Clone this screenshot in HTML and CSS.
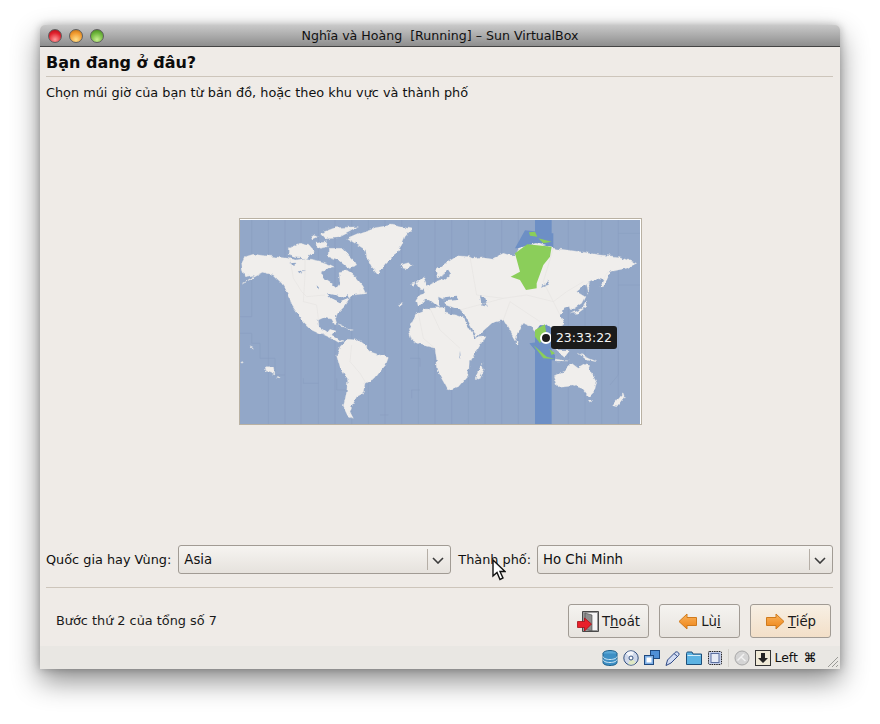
FILE: index.html
```html
<!DOCTYPE html>
<html lang="vi">
<head>
<meta charset="utf-8">
<title>Nghĩa và Hoàng [Running] – Sun VirtualBox</title>
<link rel="stylesheet" href="styles.css">
</head>
<body>
<div class="window">
  <div class="titlebar">
    <div class="lights"><span class="light red"></span><span class="light amber"></span><span class="light green"></span></div>
    <div class="title">Nghĩa và Hoàng&nbsp; [Running] – Sun VirtualBox</div>
  </div>
  <div class="content">
    <h1 class="heading">Bạn đang ở đâu?</h1>
    <div class="rule"></div>
    <p class="desc">Chọn múi giờ của bạn từ bản đồ, hoặc theo khu vực và thành phố</p>
    <div class="map-area">
      <div class="map">
        <svg class="map-svg" width="400" height="204" viewBox="240 220 400 204">
          <defs>
            <filter id="coast" filterUnits="userSpaceOnUse" x="-620" y="0" width="1240" height="650" color-interpolation-filters="sRGB">
              <feTurbulence type="fractalNoise" baseFrequency=".05" numOctaves="3" seed="4" result="n"/>
              <feDisplacementMap in="SourceGraphic" in2="n" scale="14" xChannelSelector="R" yChannelSelector="G" result="d"/>
              <feGaussianBlur in="d" stdDeviation=".9"/>
            </filter>
          </defs>
          <rect x="240" y="220" width="400" height="204" fill="#92a7c8"/>
          <g transform="translate(440 215) scale(.3333)">
            <g class="tz">
              <path d="M-565 15V305M-515 15V630M-465 15V630M-417 15V630M-365 15V630M-315 15V630M-265 15V630M-215 15V630M-165 15V630M-115 15V630M-65 15V630M-15 15V630M35 15V630M85 15V630M135 15V630M185 15V630M235 15V630M385 15V630M435 15V630M485 15V630M535 15V630"/>
              <path d="M-600 305H-565M-600 355H-565V385H-540V430H-495V480H-465M-410 490V505H-365M-310 490V525H-280M-90 430H-60V455M-85 550V525H-60M-180 600H-155M535 210H600M510 510L535 480V400M535 55H600"/>
            </g>
            <path class="zone" d="M285 15H335V630H285Z M225 100L255 46L340 55V98Z M268 385L300 380L345 420V436L310 436Z"/>
            <g class="coast">
              <g class="land">
                <path d="M-595 145L-585 125L-560 118L-525 122L-495 125L-455 130L-430 135L-405 130L-375 135L-353 140L-325 150L-315 155L-335 160L-353 170L-353 185L-330 200L-310 218L-300 205L-303 170L-280 165L-265 175L-250 190L-230 215L-220 235L-240 238L-260 240L-275 255L-285 270L-310 295L-315 305L-310 325L-315 330L-325 312L-350 308L-365 315L-363 335L-340 352L-330 340L-315 345L-325 360L-305 372L-290 378L-305 382L-325 370L-365 352L-390 340L-410 320L-425 300L-445 270L-455 235L-475 205L-500 180L-530 172L-555 185L-595 205L-555 180L-585 185L-593 165Z"/>
                <path d="M-280 70L-245 55L-195 38L-145 30L-85 42L-105 65L-115 90L-135 120L-160 145L-185 178L-205 155L-220 125L-223 105L-255 85Z"/>
                <path d="M-455 100L-420 85L-390 92L-375 110L-400 130L-430 128L-455 120Z M-360 55L-315 38L-245 35L-270 50L-305 68L-345 72Z M-335 100L-295 100L-255 140L-250 150L-275 160L-305 135L-335 125Z M-375 85L-340 80L-335 95L-360 100Z M-385 60L-365 65L-380 72Z M-118 150L-95 143L-83 150L-100 162L-115 158Z M-240 225L-220 235L-235 238Z"/>
                <path d="M-310 420L-300 395L-275 370L-250 372L-230 388L-205 412L-155 428L-163 450L-180 470L-195 490L-225 505L-230 535L-250 545L-265 575L-270 590L-260 610L-277 602L-290 575L-280 530L-277 495L-300 455Z"/>
                <path d="M-310 328L-275 340L-295 335Z M-280 342L-260 345L-275 347Z M-125 268L-112 266L-118 272Z"/>
                <path d="M-95 345L-70 295L-35 280L15 277L15 295L45 300L70 308L105 368L135 365L115 400L88 440L85 480L55 515L25 525L12 500L-5 470L-15 400L-55 390L-85 375Z"/>
                <path d="M-70 255L-60 240L-45 235L-50 220L-25 205L0 195L10 175L-5 190L-10 165L15 145L50 122L90 125L100 130L130 125L160 130L190 115L225 125L235 100L290 85L340 100L420 110L480 120L540 125L590 145L560 160L510 170L490 195L470 190L440 205L410 230L435 245L425 265L395 285L390 270L370 280L360 300L370 330L340 345L320 330L300 330L285 350L275 335L250 325L225 375L205 340L190 315L155 325L110 365L80 310L60 285L20 270L15 255L-5 245L-5 275L-30 255L-45 255L-65 275Z"/>
                <path d="M-70 205L-50 185L-35 220L-55 225Z M-85 205L-72 200L-78 215Z M480 215L500 175L510 175L490 215Z M440 205L448 200L446 238Z M395 295L425 280L440 255L437 275L410 295Z M105 490L125 448L130 460L115 493Z M228 375L235 385L228 388Z M340 485L370 470L395 445L415 460L440 445L470 500L465 525L445 545L425 520L395 510L350 515Z M445 555L455 555L450 562Z M518 572L550 535L553 545L530 575Z M415 415L470 440L440 435Z M370 350L385 360L375 365Z M350 405L390 405L375 425Z M345 432L385 438L350 438Z"/>
                <path d="M-525 455L-500 455L-495 480L-520 470Z M-490 488L-475 488L-480 492Z M-595 440L-590 440L-593 445Z M-570 395L-560 400L-565 402Z"/>
              </g>
              <g class="holes">
                <path d="M-455 145L-430 143L-440 152Z M-427 170L-405 165L-420 175Z M-340 235L-315 240L-295 250L-275 240L-270 250L-300 262L-325 250Z M-370 208L-363 215L-367 222Z M10 250L50 245L55 255L15 258Z M120 240L135 245L143 275L125 270Z M0 190L20 165L30 180L10 195Z M300 215L330 195L322 210Z M60 410L62 430L58 430Z"/>
              </g>
            </g>
            <g class="borders">
              <path d="M-450 130L-440 190L-415 230L-400 245L-345 240M-365 312L-370 270L-410 260L-405 180L-405 130M-265 390L-270 440L-240 475L-225 500M-65 295L-50 370L-15 400M-30 280L0 345L60 400M90 125L110 240L190 250L260 240L340 260L380 230L430 200M60 285L190 250M190 315L210 260L300 320M340 100L310 200L360 300"/>
            </g>
            <g class="selected">
              <path d="M225 115L262 88L335 95L330 125L310 150L290 205L290 220L258 225L240 195L212 185L240 170Z"/>
              <path d="M267 52L285 50L292 65L270 62Z M295 70L335 80L310 85Z"/>
              <path d="M285 345L315 328L318 350L300 385L285 365Z M280 390L320 425L345 432L310 430Z M328 402L345 415L335 420Z"/>
            </g>
          </g>
        </svg>
        <span class="pin"></span>
        <span class="clock">23:33:22</span>
      </div>
    </div>
    <div class="combos">
      <label class="combo-label">Quốc gia hay Vùng:</label>
      <div class="combo region"><span class="combo-text">Asia</span><span class="combo-arrow"><svg width="12" height="7" viewBox="0 0 12 7"><path d="M1 1L6 6L11 1" fill="none" stroke="#3c3c3c" stroke-width="1.6"/></svg></span></div>
      <label class="combo-label">Thành phố:</label>
      <div class="combo city"><span class="combo-text">Ho Chi Minh</span><span class="combo-arrow"><svg width="12" height="7" viewBox="0 0 12 7"><path d="M1 1L6 6L11 1" fill="none" stroke="#3c3c3c" stroke-width="1.6"/></svg></span></div>
    </div>
    <div class="rule lower"></div>
    <div class="footer">
      <span class="step">Bước thứ 2 của tổng số 7</span>
      <div class="buttons">
        <button class="btn" type="button">
          <svg width="22" height="21" viewBox="0 0 22 21"><path d="M5.5 .5H21.5V20.5H5.5Z" fill="#9a9a9a" stroke="#4a4a4a"/><path d="M8 2H20V19H8Z" fill="#f6f6f6"/><path d="M8 2L15 4V20L8 18Z" fill="#8e8e8e" stroke="#444" stroke-width=".6"/><path d="M.5 10.5H7.5V7L14.5 13L7.5 20V16.5H.5Z" fill="#e8202a" stroke="#a50f15" stroke-width=".8"/></svg>
          <span>T<u>h</u>oát</span>
        </button>
        <button class="btn" type="button">
          <svg width="20" height="17" viewBox="0 0 20 17"><defs><linearGradient id="ag" x1="0" y1="0" x2="0" y2="1"><stop offset="0" stop-color="#f9b25a"/><stop offset="1" stop-color="#ee8418"/></linearGradient></defs><path d="M1 8.5L9 1V4.5H18.5V12.5H9V16Z" fill="url(#ag)" stroke="#d07a1c" stroke-linejoin="round"/></svg>
          <span>Lù<u>i</u></span>
        </button>
        <button class="btn primary" type="button">
          <svg width="20" height="17" viewBox="0 0 20 17"><path d="M19 8.5L11 1V4.5H1.5V12.5H11V16Z" fill="url(#ag)" stroke="#d07a1c" stroke-linejoin="round"/></svg>
          <span><u>T</u>iếp</span>
        </button>
      </div>
    </div>
  </div>
  <div class="statusbar">
    <svg class="sicon" width="16" height="16" viewBox="0 0 16 16"><ellipse cx="8" cy="3.5" rx="7" ry="3" fill="#5aa7d6" stroke="#1d5f8a"/><path d="M1 3.5V12.5C1 14.2 4 15.5 8 15.5S15 14.2 15 12.5V3.5" fill="#3d8fc4" stroke="#1d5f8a"/><path d="M1 6.5C1 8.2 4 9.5 8 9.5S15 8.2 15 6.5M1 9.5C1 11.2 4 12.5 8 12.5S15 11.2 15 9.5" fill="none" stroke="#cfe6f4"/></svg>
    <svg class="sicon" width="16" height="16" viewBox="0 0 16 16"><circle cx="8" cy="8" r="7.2" fill="#cfd8ea" stroke="#33507f"/><path d="M8 8L3 3.5A7 7 0 0 1 11 2Z" fill="#f4f6fb"/><path d="M8 8L13 12.5A7 7 0 0 1 5 14Z" fill="#dfe8c4"/><circle cx="8" cy="8" r="2" fill="#fff" stroke="#33507f"/></svg>
    <svg class="sicon" width="16" height="16" viewBox="0 0 16 16"><rect x="6.5" y=".5" width="9" height="8" fill="#4f8fd6" stroke="#1f4a80"/><rect x=".5" y="5.5" width="9" height="9" fill="#7fb0e6" stroke="#1f4a80"/><rect x="2.5" y="7.5" width="5" height="5" fill="#fff"/></svg>
    <svg class="sicon" width="16" height="16" viewBox="0 0 16 16"><path d="M1 15.5L2.5 10L10 2.5C12 .5 15.5 3.5 13.5 5.5L6 13Z" fill="#d2dcf2" stroke="#2f4a86"/><path d="M9 3.5L12.5 6.5" stroke="#2f4a86"/></svg>
    <svg class="sicon" width="16" height="16" viewBox="0 0 16 16"><path d="M.5 3.5C.5 2.5 1 2 2 2H6L7 4H15.5V14.5H.5Z" fill="#5cb3e3" stroke="#1d4f7a"/><path d="M1.5 5.5H14.5" stroke="#d4eefa"/></svg>
    <svg class="sicon" width="16" height="16" viewBox="0 0 16 16"><rect x="1.5" y="1.5" width="13" height="13" rx="1" fill="#c6d0ea" stroke="#222" stroke-dasharray="1.5 .8"/><rect x="4" y="3.5" width="8" height="9" fill="#e6ebf6" stroke="#5a6f9f"/></svg>
    <span class="sep"></span>
    <svg class="sicon" width="16" height="16" viewBox="0 0 16 16"><circle cx="8" cy="8" r="7" fill="#d4d4d4" stroke="#a8a8a8"/><path d="M3.5 10.5L10 4M7 7L11.5 11" stroke="#f2f2f2" stroke-width="1.5"/></svg>
    <svg class="sicon" width="16" height="16" viewBox="0 0 16 16"><rect x=".5" y=".5" width="15" height="15" fill="#efe9d6" stroke="#333"/><path d="M6 3H10V8H13L8 13L3 8H6Z" fill="#222"/></svg>
    <span class="hostkey">Left <b class="cmd">⌘</b></span>
    <svg class="grip" width="12" height="12" viewBox="0 0 12 12"><path d="M11 1L1 11M11 5L5 11M11 9L9 11" stroke="#9a9a96" fill="none"/></svg>
  </div>
  <svg class="cursor" width="14" height="22" viewBox="0 0 14 22"><path d="M1 1V17L5 13.5L8 20.5L11 19L8 12.5H13Z" fill="#fff" stroke="#111" stroke-width="1.4"/></svg>
</div>
</body>
</html>
```
FILE: styles.css
```css
* { box-sizing: border-box; }
html, body { margin: 0; padding: 0; background: #fff; }
body { width: 880px; height: 724px; padding: 25px 40px 55px; overflow: hidden; font-family: "DejaVu Sans", sans-serif; font-size: 12.85px; color: #101010; }
.window { position: relative; width: 800px; height: 644px; display: flex; flex-direction: column; background: #efebe7; border-radius: 5px 5px 0 0; box-shadow: 0 12px 28px rgba(0,0,0,.45), 0 0 8px rgba(0,0,0,.25); }
.titlebar { position: relative; flex: none; height: 22px; display: flex; align-items: center; justify-content: center; background: linear-gradient(#c9c9c9, #8e8e8e); border-bottom: 1px solid #444; border-radius: 5px 5px 0 0; }
.lights { position: absolute; left: 8px; top: 4px; display: flex; gap: 7px; }
.light { width: 14px; height: 14px; border-radius: 50%; border: 1px solid #5f5f5f; }
.red { background: radial-gradient(circle at 50% 80%, #ff9a9a, #e0202c 60%, #a3101a); }
.amber { background: radial-gradient(circle at 50% 80%, #ffe08a, #f0982c 60%, #b06a14); }
.green { background: radial-gradient(circle at 50% 80%, #c8f090, #6cb43a 60%, #3f7d1c); }
.title { font-size: 12.6px; color: #111; }
.content { flex: 1; min-height: 0; display: flex; flex-direction: column; padding: 6px 7px 0 6px; }
.heading { margin: 0; font-size: 16px; font-weight: 700; line-height: 20px; color: #0c0c0c; }
.rule { flex: none; height: 1px; margin-top: 3px; background: #cdc5bb; }
.desc { margin: 8px 0 0; line-height: 16px; }
.map-area { flex: 1; min-height: 0; display: flex; align-items: center; justify-content: center; }
.map { position: relative; width: 403px; height: 207px; margin: 0 0 3px 2px; border: 1px solid #b9b1a3; background: #fff; }
.map-svg { display: block; margin: 1px 0 0 0; }
.tz path { fill: none; stroke: #889cbe; stroke-width: 1.5; }
.zone { fill: #6d8fc5; }
.coast { filter: url(#coast); }
.land path { fill: #f0eeec; stroke: #e4e3e4; stroke-width: 1; stroke-linejoin: round; }
.holes path { fill: #92a7c8; }
.borders path { fill: none; stroke: #e2e0df; stroke-width: 1.5; }
.selected path { fill: #8bce5a; }
.pin { position: absolute; left: 300px; top: 113px; width: 12px; height: 12px; border-radius: 50%; background: #1c1c1c; border: 2px solid #fff; }
.clock { position: absolute; left: 311px; top: 107px; width: 66px; height: 23px; border-radius: 3px; background: #1b1b1b; color: #f4f4f4; font-size: 12.5px; line-height: 23px; text-align: center; }
.combos { flex: none; display: flex; align-items: center; height: 29px; }
.combo-label { white-space: nowrap; }
.combo { display: flex; align-items: center; height: 29px; border: 1px solid #a19b94; border-radius: 3px; background: linear-gradient(#f6f4f1, #e6e2dd); }
.region { width: 273px; margin-left: 7px; margin-right: 7px; }
.city { flex: 1; margin-left: 6px; }
.combo-text { flex: 1; padding-left: 5px; font-size: 13.3px; }
.combo-arrow { flex: none; width: 23px; height: 21px; display: flex; align-items: center; justify-content: center; border-left: 1px solid #b5aea6; padding: 1px 2px 0 0; }
.lower { margin-top: 13px; }
.footer { flex: none; height: 58px; display: flex; align-items: center; justify-content: space-between; padding: 8px 2px 0 10px; }
.step { color: #1a1a1a; padding-bottom: 2px; }
.buttons { display: flex; gap: 10px; }
.btn { width: 81px; height: 34px; display: flex; align-items: center; justify-content: center; gap: 3px; padding: 0; border: 1px solid #a19b94; border-radius: 3px; background: linear-gradient(#f5f3f0, #e7e3de); font: inherit; font-size: 13.3px; color: #1a1a1a; }
.primary { background: linear-gradient(#f7efe4, #f3dfc8); }
.statusbar { position: relative; flex: none; height: 23px; display: flex; align-items: center; justify-content: flex-end; gap: 5px; padding-right: 24px; background: #e9e7e3; }
.sicon { flex: none; }
.sep { width: 1px; height: 18px; background: #d5d2cc; margin: 0; }
.hostkey { font-size: 12.5px; color: #111; white-space: nowrap; margin-left: -2px; word-spacing: 2px; }
.cmd { font-size: 13px; }
.grip { position: absolute; right: 1px; bottom: 1px; }
.cursor { position: absolute; left: 452px; top: 534px; }
```
